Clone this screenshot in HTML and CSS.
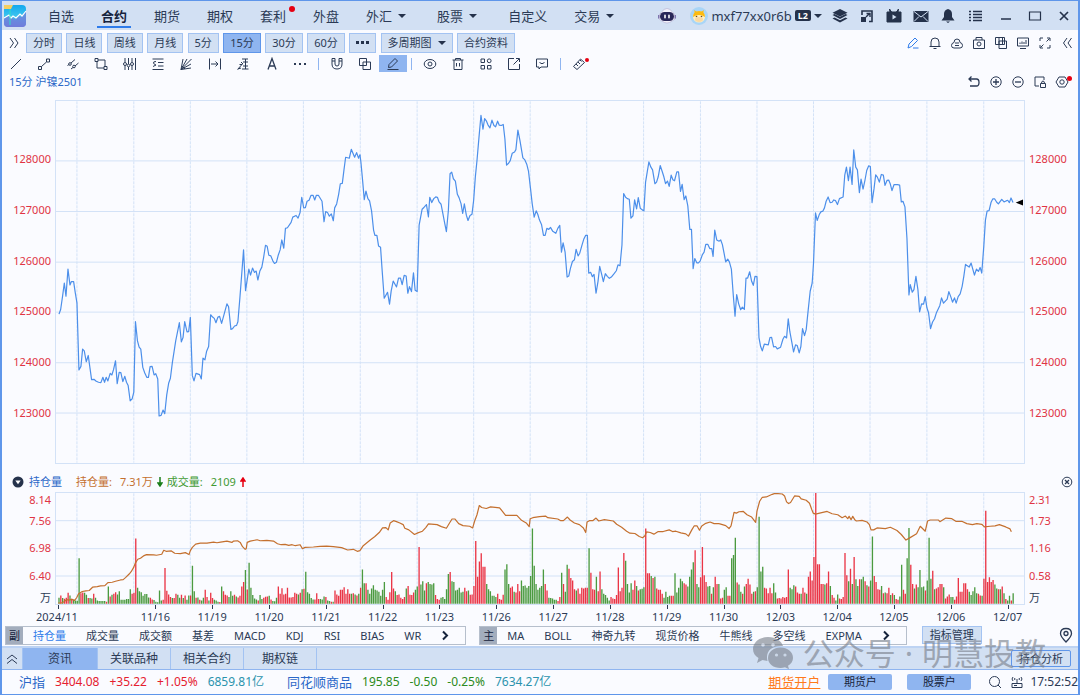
FILE: index.html
```html
<!DOCTYPE html>
<html lang="zh-CN">
<head>
<meta charset="utf-8">
<meta name="viewport" content="width=device-width, initial-scale=1">
<title>沪镍2501</title>
<link rel="stylesheet" href="styles.css">
</head>
<body>
<div class="app">
  <header class="topbar">
    <svg class="logo" viewBox="0 0 24 24"><defs><linearGradient id="lg" x1="0" y1="0" x2="0" y2="1"><stop offset="0" stop-color="#12a8ee"/><stop offset=".5" stop-color="#3cc4ee"/><stop offset="1" stop-color="#6a6fd6"/></linearGradient></defs><rect x="1" y="1" width="22" height="22" rx="4" fill="url(#lg)"/><path d="M1 14l5-2 3 2 3 2 4-4 2 1 5-6v12a4 4 0 0 1-4 4H5a4 4 0 0 1-4-4z" fill="#7280dc" opacity=".75"/><path d="M1 14l5-3 2 3 2-2 3 2 4-4 2 2 4-5" fill="none" stroke="#fff" stroke-width="1.200"/><path d="M7 5v16" stroke="#2fe0c8" stroke-width="1"/><path d="M1 1h9L8 5H1z" fill="#f3cf62"/></svg>
    <nav class="menu">
      <a href="#">自选</a><a href="#" class="on">合约</a><a href="#">期货</a><a href="#">期权</a><a href="#" class="dot">套利</a><a href="#">外盘</a><a href="#">外汇<i class="caret"></i></a><a href="#">股票<i class="caret"></i></a><a href="#">自定义</a><a href="#">交易<i class="caret"></i></a>
    </nav>
    <div class="user">
      <svg class="robot" viewBox="0 0 18 18"><path d="M3.500 5Q9-2 14.500 5L17 8v4l-3 2q-5 4-10 0l-3-2V8z" fill="#f4f2fa" stroke="#a79fc4" stroke-width=".5"/><rect x="2" y="5" width="14" height="9" rx="4.500" fill="#2a2858"/><path d="M.8 8v3.500M17.200 8v3.500" stroke="#6b5fa0" stroke-width="1.200"/><path d="M7 8.200v2.600M11 8.200v2.600" stroke="#fff" stroke-width="1.600" stroke-linecap="round"/></svg>
      <svg class="avatar" viewBox="0 0 18 18"><circle cx="9" cy="9" r="9" fill="#a9d5f7"/><ellipse cx="9" cy="10" rx="6" ry="5.500" fill="#fff0c4"/><path d="M3 10q0-6 6-6t6 6q-3-2-6-2t-6 2z" fill="#fdbb10"/><path d="M5 6L4 3l3 2M13 6l1-3-3 2" fill="#fdbb10"/><circle cx="6.500" cy="9.500" r=".8" fill="#6b4a20"/><circle cx="11.500" cy="9.500" r=".8" fill="#6b4a20"/><ellipse cx="9" cy="12.500" rx="4" ry="2.400" fill="#fbd9a2"/></svg>
      <span>mxf77xx0r6b</span><b class="level">L2</b><i class="caret"></i>
    </div>
    <div class="tools">
      <button aria-label="图层"><svg viewBox="0 0 16 16"><path d="M8 1l7.500 3.800L8 8.600.5 4.800z" fill="currentColor"/><path d="M.5 7l2-1L8 8.800 13.500 6l2 1L8 11z" fill="currentColor"/><path d="M.5 10.500l2-1L8 12.200l5.500-2.700 2 1L8 14.500z" fill="currentColor"/></svg></button>
      <button aria-label="弹出"><svg viewBox="0 0 16 16"><path d="M3 7V3h10v10.500h-3" fill="none" stroke="currentColor" stroke-width="1.600"/><path d="M7 9l4-4M7.500 5.500H11V9" fill="none" stroke="currentColor" stroke-width="1.400"/><path d="M2 9h5v5H2z" fill="currentColor"/></svg></button>
      <button aria-label="视频"><svg viewBox="0 0 16 16"><path d="M1 4h14v10H1zM3.500 1l2 3h-1.500zM12.500 1l-2 3h1.500z" fill="currentColor" stroke="currentColor"/><path d="M6.500 6.500l4 2.500-4 2.500z" fill="#d2e0f3"/></svg></button>
      <button aria-label="邮件"><svg viewBox="0 0 16 16"><path d="M.5 3h15v11H.5z" fill="currentColor"/><path d="M1 3.500l7 5.500 7-5.500M1 13.500l5-5M15 13.500l-5-5" fill="none" stroke="#d2e0f3"/></svg></button>
      <button aria-label="提醒"><svg viewBox="0 0 16 16"><path d="M8 1q4 1 4 5v3l2.500 3.500h-13L4 9V6q0-4 4-5zM6 13.500h4L8 15z" fill="currentColor"/></svg></button>
      <button aria-label="列表"><svg viewBox="0 0 16 16"><path d="M2 3.500h2M6 3.500h9M2 6.500h2M6 6.500h9M2 9.500h2M6 9.500h9M2 12.500h2M6 12.500h9" stroke="currentColor" stroke-width="1.500"/></svg></button>
    </div>
    <div class="tools win">
      <button aria-label="最小化"><svg viewBox="0 0 16 16"><path d="M3 11h10" stroke="currentColor" stroke-width="1.500"/></svg></button>
      <button aria-label="最大化"><svg viewBox="0 0 16 16"><path d="M2.500 4h11v8h-11z" fill="none" stroke="currentColor" stroke-width="1.200"/></svg></button>
      <button aria-label="关闭"><svg viewBox="0 0 16 16"><path d="M4 4l8 8M12 4l-8 8" stroke="currentColor" stroke-width="1.700"/></svg></button>
    </div>
  </header>

  <div class="bar periods">
    <button class="ico" aria-label="展开"><svg viewBox="0 0 14 14"><path d="M3 2l3.500 5L3 12M7.500 2L11 7l-3.500 5" class="s"/></svg></button>
    <div class="chips"><button>分时</button><button>日线</button><button>周线</button><button>月线</button><button>5分</button><button class="on">15分</button><button>30分</button><button>60分</button><button class="more" aria-label="更多"><i></i><i></i><i></i></button><button>多周期图<i class="caret"></i></button><button>合约资料</button></div>
    <div class="right">
      <button class="ico edit" aria-label="编辑"><svg viewBox="0 0 14 14"><path d="M2 12l1-4 6-6 2.500 2.500-6 6L2 12zM7 12h5.500" class="s"/></svg></button>
      <button class="ico" aria-label="预警"><svg viewBox="0 0 14 14"><path d="M3 10.500V6q0-4 4-4t4 4v4.500M1.500 10.500h11M5.500 12.500h3" class="s"/></svg></button>
      <button class="ico" aria-label="云"><svg viewBox="0 0 14 14"><path d="M4 12Q1.500 12 1.500 9.500T4 6.500Q4 3 7 3t3 3.500q2.500.5 2.500 3T10 12zM5 7h4M5 9.500h4" class="s"/></svg></button>
      <button class="ico" aria-label="截图"><svg viewBox="0 0 14 14"><path d="M1.500 4h11v8.500h-11zM4 4V1.500h6V4" class="s"/><circle cx="7" cy="8" r="2" class="s"/></svg></button>
      <button class="ico" aria-label="叠加"><svg viewBox="0 0 14 14"><path d="M1.500 1.500h7v7h-7zM5 5h7.500v7.500H5zM5 1.500h5.500v7H5z" class="s"/></svg></button>
      <button class="ico" aria-label="屏幕"><svg viewBox="0 0 14 14"><path d="M1.500 2h11v8h-11zM4 8V6.500M6 8V5.500M8 8V6M10 8V4M4 12.500h6" class="s"/></svg></button>
      <button class="ico" aria-label="全屏"><svg viewBox="0 0 14 14"><path d="M2 5V2h3M9 2h3v3M12 9v3H9M5 12H2V9M8.500 5.500l3-3M5.500 8.500l-3 3" class="s"/></svg></button>
      <button class="ico" aria-label="收起"><svg viewBox="0 0 14 14"><path d="M7 2L3.500 7 7 12M11.500 2L8 7l3.500 5" class="s"/></svg></button>
    </div>
  </div>

  <div class="bar draw">
    <div class="group lines">
      <button class="ico" aria-label="直线"><svg viewBox="0 0 14 14"><path d="M2 12L12 2" class="s"/></svg></button>
      <button class="ico" aria-label="线段"><svg viewBox="0 0 14 14"><path d="M1.500 9.500h3v3h-3zM9.500 2h3v3h-3zM4.500 9.500l5-4.500" class="s"/></svg></button>
      <button class="ico" aria-label="平行线"><svg viewBox="0 0 14 14"><path d="M1.500 8.500l1.500-1M5 6l4-3.500M5 12l2-1.500M9 9l3.500-3" class="s"/><circle cx="4" cy="7" r="1.300" class="s"/><circle cx="8" cy="9.500" r="1.300" class="s"/></svg></button>
      <button class="ico" aria-label="矩形"><svg viewBox="0 0 14 14"><path d="M1 1.500h3v3H1zM10 9.500h3v3h-3zM4 3h7v6.500M10 11H3V4.500" class="s"/></svg></button>
      <button class="ico" aria-label="周期线"><svg viewBox="0 0 14 14"><path d="M2 1v4M2 8.500V13M5.500 1v6M5.500 10v3M9 1v4M9 8.500V13M12.500 1v12" class="s"/><circle cx="2" cy="7" r="1.500" class="s"/><circle cx="5.500" cy="8.500" r="1.300" class="s"/><circle cx="9" cy="7" r="1.500" class="s"/></svg></button>
      <button class="ico" aria-label="黄金分割"><svg viewBox="0 0 14 14"><path d="M1.500 2h11M7 5.500h5.500M7 9h5.500M1.500 12.500h11M5 4.500Q2 4.500 2.500 6T5 8L2 9.500" class="s"/></svg></button>
      <button class="ico" aria-label="扇形"><svg viewBox="0 0 14 14"><path d="M2 12.500L4 2M2 12.500L8 2M2 12.500L12.500 2M2 12.500l10-5.500M2 12.500l10-1.500M3 9l3 3" class="s"/></svg></button>
      <button class="ico" aria-label="区间"><svg viewBox="0 0 14 14"><path d="M1.500 1.500v11M12.500 1.500v11M3 7h7M7.500 4.500L10 7 7.500 9.500" class="s"/></svg></button>
      <button class="ico" aria-label="量度"><svg viewBox="0 0 14 14"><path d="M1.500 12.500L5.500 8M3.500 7.500h3M6 2h6M7 5h5M7 9h5M6 12h6.500M9.500 2v10M2 12l3-1M5 5l2 2" class="s"/></svg></button>
      <button class="ico" aria-label="文字"><svg viewBox="0 0 14 14"><path d="M3 12.500L7 1.500l4 11M4.500 9h5" class="s w"/></svg></button>
      <button class="ico" aria-label="更多工具"><svg viewBox="0 0 14 14"><path d="M1 6h2v2H1zM6 6h2v2H6zM11 6h2v2h-2z" fill="currentColor"/></svg></button>
    </div>
    <span class="sep"></span>
    <div class="group">
      <button class="ico" aria-label="磁吸"><svg viewBox="0 0 14 14"><path d="M2 1.500h3V7q0 2 2 2t2-2V1.500h3V7q0 5-5 5T2 7zM2 4h3M9 4h3" class="s"/></svg></button>
      <button class="ico" aria-label="复制"><svg viewBox="0 0 14 14"><path d="M1.500 1.500h7v7h-7zM5 5h7.500v7.500H5z" class="s"/></svg></button>
      <button class="ico on" aria-label="画笔"><svg viewBox="0 0 14 14"><path d="M2.500 10.500l.5-3L9 1.500 11.500 4l-6 6zM1.500 12.500h11" class="s"/></svg></button>
    </div>
    <span class="sep"></span>
    <div class="group">
      <button class="ico" aria-label="显示"><svg viewBox="0 0 14 14"><ellipse cx="7" cy="7" rx="5.800" ry="4.500" class="s"/><circle cx="7" cy="7" r="2" class="s"/></svg></button>
      <button class="ico" aria-label="删除"><svg viewBox="0 0 14 14"><path d="M1.500 3h11M4.500 3V1.500h5V3M3 3v9.500h8V3M5.500 6v3.500M8.500 6v3.500" class="s"/></svg></button>
      <button class="ico" aria-label="组件"><svg viewBox="0 0 14 14"><path d="M2 2h3.500v3.500H2zM2 8.500h3.500V12H2zM8.500 8.500H12V12H8.500z" class="s"/><circle cx="10.200" cy="3.800" r="1.900" class="s"/></svg></button>
      <button class="ico" aria-label="导出"><svg viewBox="0 0 14 14"><path d="M7 1.500H1.500v11h11V7M9 1.500h3.500V5M12 2L6.500 7.500" class="s"/></svg></button>
      <button class="ico" aria-label="评论"><svg viewBox="0 0 14 14"><path d="M1.500 2h11v8H6l-2 2v-2H1.500zM4.500 5.500Q7 8 9.500 5.500" class="s"/></svg></button>
    </div>
    <span class="sep"></span>
    <button class="ico dot small" aria-label="测量"><svg viewBox="0 0 14 14"><path d="M1.500 9.500l7-7.500 4 3.500-7.500 7zM4 7l2 2M6 5l2 2M8 3l1.500 1.500" class="s"/></svg></button>
  </div>

  <div class="bar title">
    <h1>15分 沪镍2501</h1>
    <div class="right">
      <button class="ico" aria-label="撤销"><svg viewBox="0 0 14 14"><path d="M4.500 1.500L2 4l2.500 2.500M2 4h7.500Q12 4 12 7.500T9.500 11H3" class="s w"/></svg></button>
      <button class="ico" aria-label="放大"><svg viewBox="0 0 14 14"><circle cx="7" cy="7" r="5.200" class="s"/><path d="M4 7h6M7 4v6" class="s w"/></svg></button>
      <button class="ico" aria-label="缩小"><svg viewBox="0 0 14 14"><circle cx="7" cy="7" r="5.200" class="s"/><path d="M4 7h6" class="s w"/></svg></button>
      <button class="ico" aria-label="锁定"><svg viewBox="0 0 14 14"><path d="M6 11H2V2h9v3M7.500 8.500h5v4h-5zM8.500 8.500Q8.500 6 10 6t1.500 2.500" class="s"/></svg></button>
      <button class="ico dot" aria-label="设置"><svg viewBox="0 0 14 14"><path d="M4 2h6l3 5-3 5H4L1 7z" class="s"/><circle cx="7" cy="7" r="2.200" class="s"/></svg></button>
    </div>
  </div>

  <main class="charts">
    <section class="plot price">
      <div class="axis left"><span>128000</span><span>127000</span><span>126000</span><span>125000</span><span>124000</span><span>123000</span></div>
      <svg class="canvas" viewBox="166 30 2911 1094" preserveAspectRatio="none">
        <path class="grid" d="M166 211H3077M166 364H3077M166 517H3077M166 668H3077M166 821H3077M166 973H3077"/>
        <path class="grid dash" d="M229 31V1123M400 31V1123M570 31V1123M740 31V1123M910 31V1123M1081 31V1123M1252 31V1123M1422 31V1123M1592 31V1123M1762 31V1123M1933 31V1123M2104 31V1123M2274 31V1123M2444 31V1123M2614 31V1123M2785 31V1123M2956 31V1123"/>
        <polyline class="quote" points="175,674 180,660 186,618 191,580 196,620 202,538 208,586 212,576 219,576 224,610 229,640 235,843 241,832 246,780 251,785 257,818 263,799 268,836 273,872 280,871 287,877 294,880 301,881 307,865 312,880 317,865 322,876 329,853 334,858 339,842 345,815 350,884 356,850 361,851 367,878 373,862 378,880 383,890 389,936 395,930 400,910 405,697 411,755 416,774 421,780 427,835 433,852 439,865 444,865 449,833 455,832 461,858 466,854 472,870 476,982 482,980 488,964 493,975 499,918 505,882 510,868 516,820 526,755 537,700 543,758 548,745 553,697 560,728 565,727 570,684 576,860 581,876 587,853 598,857 603,870 608,807 614,812 619,786 625,772 631,676 637,683 642,687 647,700 653,683 658,681 664,702 670,680 680,643 685,652 692,720 697,718 703,710 709,708 713,697 719,625 724,560 730,480 736,603 741,570 746,538 751,556 757,535 763,548 768,544 773,571 779,544 785,532 790,505 796,466 801,469 806,496 812,498 818,513 823,521 829,517 834,497 840,480 845,450 851,475 856,415 862,413 873,397 878,381 888,376 894,384 900,367 905,321 911,353 916,352 921,333 927,330 933,315 939,315 944,329 949,315 955,315 966,333 972,395 977,364 983,368 988,378 994,371 1000,392 1004,353 1010,341 1016,312 1021,280 1027,279 1032,238 1037,200 1048,203 1054,176 1059,188 1064,200 1070,186 1076,203 1080,192"/>
        <polyline class="quote" transform="translate(1080 0)" points="0,192 3,215 8,270 13,328 18,302 24,325 29,332 35,362 41,420 45,436 51,436 56,468 62,472 67,545 73,626 83,608 89,644 94,604 100,574 110,592 116,565 122,565 127,585 133,557 139,559 144,611 149,591 155,606 161,549 166,602 172,606 178,405 187,357 193,351 200,343 206,380 210,321 216,337 222,325 228,320 233,321 238,335 244,342 249,368 255,400 260,425 266,360 271,250 276,245 281,265 287,272 293,312 298,322 304,340 309,370 314,341 320,375 325,391 331,376 337,372 342,330 347,260 352,210 358,140 364,73 370,115 375,83 380,90 385,102 391,111 397,88 403,104 408,108 414,91 419,103 425,104 431,101 436,145 441,224 447,218 452,210 458,188 465,184 469,177 475,118 481,148 490,202 496,208 502,222 507,243 513,295 518,340 524,381 530,362 535,373 540,390 546,403 552,436 557,436 562,415 568,418 573,412 580,424 589,430 595,415 601,406 606,487 611,459 617,487 623,562 628,559 633,536 639,515 645,510 650,478 656,498 661,490 668,465 673,448 679,436 684,436 688,550 694,548 699,561 704,554 710,611 716,575 721,530 727,554 732,576 738,552 744,560 750,566 756,562 765,551 771,543 776,525 782,528 788,465 793,310 799,321 804,325 810,327 815,384 821,377 826,329 832,356 837,322 843,354 849,359 854,362 859,275 864,244 869,214 875,230 880,238 887,280 892,275 897,259 903,225 909,243 914,259 919,280 925,272 930,288 936,254 941,268 946,271 953,244 958,244 964,303 969,282 975,328 980,317 986,347 992,418 997,418 1002,537 1007,506 1013,519 1018,519 1023,514 1030,494 1035,487 1040,463 1046,463 1052,476 1058,476 1062,500 1067,420 1073,450 1080,454"/>
        <polyline class="quote" transform="translate(2160 0)" points="0,454 5,450 10,464 15,490 20,516 26,508 31,516 37,538 43,620 48,680 53,615 59,643 65,661 70,653 76,660 81,565 86,565 92,546 98,575 103,587 108,560 114,561 120,745 125,772 130,785 136,765 148,767 153,745 158,744 164,773 170,772 175,779 185,774 192,750 197,741 203,746 208,688 213,728 219,760 224,788 230,767 235,769 241,791 246,772 251,718 257,739 262,721 268,662 274,605 280,580 284,520 290,368 295,391 301,374 306,365 312,363 317,353 322,333 328,320 334,337 340,336 345,329 350,331 356,343 362,325 373,320 378,254 383,230 389,271 394,230 400,282 405,178 411,230 416,238 422,307 427,266 433,296 439,268 444,240 450,226 455,228 460,337 466,295 471,253 476,260 482,275 488,252 494,254 499,285 505,270 510,269 515,281 520,301 526,283 537,283 543,284 548,335 553,333 559,350 565,445 571,616 575,585 581,608 586,600 592,560 598,600 603,667 609,643 615,644 620,621 625,655 630,670 636,718 642,698 648,688 654,669 664,648 669,625 675,641 686,629 691,606 697,622 702,638 708,625 713,641 719,621 725,613 731,590 736,560 741,524 752,532 758,520 768,556 774,538 780,545 785,533 790,550 796,470 801,390 806,363 812,361 818,336 823,326 829,326 835,336 840,341 850,327 857,335 863,332 868,330 873,337 878,323 884,337"/>
        <path d="M3052 337l22-9v18z"/>
      </svg>
      <div class="axis"><span>128000</span><span>127000</span><span>126000</span><span>125000</span><span>124000</span><span>123000</span></div>
    </section>

    <div class="legend">
      <button class="fold" aria-label="折叠"><svg viewBox="0 0 12 12"><circle cx="6" cy="6" r="5.500" fill="#25324b"/><path d="M3.300 4.500h5.400L6 8.300z" fill="#fff"/></svg></button>
      <span class="name">持仓量</span>
      <span class="value oi"><span>持仓量:</span><span>7.31万</span></span>
      <svg class="arrow" viewBox="0 0 6 10"><path d="M3 0v8M1 6l2 3 2-3z" stroke="#1a7d1a" stroke-width="1.500" fill="#1a7d1a"/></svg>
      <span class="value vol"><span>成交量:</span><span>2109</span></span>
      <svg class="arrow" viewBox="0 0 6 10"><path d="M3 10V2M1 4l2-3 2 3z" stroke="#e60012" stroke-width="1.500" fill="#e60012"/></svg>
      <button class="ico close" aria-label="关闭指标"><svg viewBox="0 0 14 14"><circle cx="7" cy="7" r="4.800" class="s"/><path d="M5 5l4 4M9 5l-4 4" class="s w"/></svg></button>
    </div>

    <section class="plot volume">
      <div class="axis left"><span>8.14</span><span>7.56</span><span>6.98</span><span>6.40</span><span class="unit">万</span></div>
      <svg class="canvas" viewBox="166 70 2911 337" preserveAspectRatio="none">
        <path class="grid" d="M166 154H3077M166 239H3077M166 322H3077"/>
        <path class="grid dash" d="M229 71V406M400 71V406M570 71V406M740 71V406M910 71V406M1081 71V406M1252 71V406M1422 71V406M1592 71V406M1762 71V406M1933 71V406M2104 71V406M2274 71V406M2444 71V406M2614 71V406M2785 71V406M2956 71V406"/>
        <path id="up" class="up"/><path id="down" class="down"/>
        <polyline class="interest" points="172,404 182,404 190,400 198,394 205,395 213,393 222,396 228,388 234,376 245,369 256,367 266,366 276,356 290,354 300,352 313,351 322,342 335,341 345,338 360,334 368,333 375,327 386,316 392,309 400,295 405,282 412,271 420,268 431,260 438,257 460,258 468,259 484,256 490,244 497,247 513,246 523,253 540,254 555,251 566,257 570,245 576,235 586,225 600,222 620,222 640,219 650,221 661,219 680,216 695,220 700,216 712,215 720,220 727,233 735,241 738,239 741,220 750,216 771,212 780,215 800,214 820,216 832,224 843,227 855,226 866,229 876,227 886,230 900,227 907,239 915,235 940,234 960,232 980,231 1000,233 1025,236 1043,243 1060,241 1072,247 1080,245"/>
        <polyline class="interest" transform="translate(1080 0)" points="0,245 10,230 20,222 32,212 44,203 58,190 68,176 78,175 85,182 91,161 101,154 110,157 120,161 130,166 135,177 147,182 164,196 174,191 188,186 198,175 206,164 232,166 245,172 260,177 269,162 277,149 286,149 297,163 310,169 330,171 339,176 345,155 352,136 359,108 366,114 380,117 393,112 420,115 428,125 438,138 472,138 486,153 500,161 509,172 512,148 520,145 540,142 558,140 565,145 595,149 604,154 612,154 624,143 632,152 645,161 660,166 672,176 679,190 683,158 690,154 700,154 710,146 718,155 735,151 762,155 772,165 787,174 802,186 812,192 827,193 840,202 850,206 857,200 862,188 873,190 884,195 897,187 912,187 930,182 940,187 950,186 965,191 980,194 988,201 998,182 1005,170 1014,170 1021,183 1028,170 1040,162 1053,158 1065,163 1080,163"/>
        <polyline class="interest" transform="translate(2160 0)" points="0,163 10,166 20,169 30,178 36,170 45,129 52,131 60,127 73,126 84,136 98,143 110,159 114,125 122,95 130,83 142,82 160,74 168,71 190,73 197,79 203,97 209,102 215,99 227,79 241,80 247,88 262,92 272,101 279,121 283,131 290,134 312,129 325,126 340,133 357,136 370,145 380,140 387,148 391,141 397,151 402,141 408,151 413,155 430,153 445,158 452,166 457,182 465,182 475,176 500,178 515,174 535,184 548,196 562,213 572,207 594,194 605,171 620,186 627,155 635,152 660,152 664,157 682,146 700,148 712,156 730,156 745,163 762,166 775,163 790,165 798,173 815,171 830,170 843,166 862,173 875,179 879,188"/>
      </svg>
      <div class="axis"><span>2.31</span><span>1.73</span><span>1.16</span><span>0.58</span><span class="unit">万</span></div>
    </section>
    <div class="dates"><span class="first">2024/11</span><span>11/16</span><span>11/19</span><span>11/20</span><span>11/21</span><span>11/22</span><span>11/23</span><span>11/26</span><span>11/27</span><span>11/28</span><span>11/29</span><span>11/30</span><span>12/03</span><span>12/04</span><span>12/05</span><span>12/06</span><span>12/07</span></div>
  </main>

  <div class="indicators">
    <div class="strip"><b>副</b><button class="on">持仓量</button><button>成交量</button><button>成交额</button><button>基差</button><button>MACD</button><button>KDJ</button><button>RSI</button><button>BIAS</button><button>WR</button><button class="next" aria-label="下一组"><svg viewBox="0 0 8 10"><path d="M2 1l4 4-4 4" fill="none" stroke="currentColor" stroke-width="2"/></svg></button></div>
    <div class="strip"><b>主</b><button>MA</button><button>BOLL</button><button>神奇九转</button><button>现货价格</button><button>牛熊线</button><button>多空线</button><button>EXPMA</button><button class="next" aria-label="下一组"><svg viewBox="0 0 8 10"><path d="M2 1l4 4-4 4" fill="none" stroke="currentColor" stroke-width="2"/></svg></button></div>
    <button class="manage">指标管理</button>
    <button class="ico pin" aria-label="定位"><svg viewBox="0 0 14 16"><path d="M7 15Q1.500 9.500 1.500 6.500 1.500 1.500 7 1.500t5.500 5Q12.500 9.500 7 15z" class="s w"/><circle cx="7" cy="6.500" r="2" class="s w"/></svg></button>
  </div>

  <nav class="panels">
    <button class="up2" aria-label="展开面板"><svg viewBox="0 0 14 14"><path d="M2 7l5-4 5 4M2 11.500l5-4 5 4" class="s"/></svg></button>
    <button class="first on">资讯</button><button>关联品种</button><button>相关合约</button><button>期权链</button>
    <button class="analysis">持仓分析</button>
  </nav>

  <footer class="status">
    <div class="index"><span class="name">沪指</span><span class="red">3404.08</span><span class="red">+35.22</span><span class="red">+1.05%</span><span class="cyan">6859.81亿</span></div>
    <div class="index second"><span class="name">同花顺商品</span><span class="green">195.85</span><span class="green">-0.50</span><span class="green">-0.25%</span><span class="cyan">7634.27亿</span></div>
    <div class="account"><a href="#">期货开户</a><button>期货户</button><button>股票户</button></div>
    <button class="ico" aria-label="搜索"><svg viewBox="0 0 14 14"><circle cx="6.500" cy="6.500" r="5" class="s"/><path d="M10 10l3 3" class="s"/></svg></button>
    <svg class="signal" viewBox="0 0 14 14"><path d="M2 8.500h10v4H2zM7 8.500V4M4 10.500h3M3 2Q1 4 3 6M11 2q2 2 0 4M5 3Q4 4 5 5M9 3q1 1 0 2" class="s"/></svg>
    <time>17:52:52</time>
  </footer>
  <div class="watermark">
    <svg viewBox="0 0 42 34"><path d="M16 1C7 1 1 6.500 1 13c0 4 2 7 5.500 9L5 27l5.500-3 5 1C13 15 20 9 31 10 29.500 5 24 1 16 1z" fill="currentColor"/><path d="M28.500 11.500c-7 0-12.500 4.500-12.500 10.500S21.500 32 28.500 32c1.500 0 3-.3 4.500-.7l4 2-1-3.500c3-2 5-4.500 5-7.800 0-6-5.500-10.500-12.500-10.500z" fill="currentColor"/><g fill="#c8d2e2"><circle cx="11" cy="9" r="1.800"/><circle cx="21" cy="9" r="1.800"/><circle cx="24.500" cy="19" r="1.600"/><circle cx="33" cy="19" r="1.600"/></g></svg>
    <span>公众号</span><span>·</span><span>明慧投教</span>
  </div>
</div>
<script src="chart.js"></script>
</body>
</html>
```
FILE: styles.css
```css
* { box-sizing: border-box; }
html, body { height: 100%; margin: 0; }
body {
  font: 11px/16px "Noto Sans", "Noto Sans CJK SC", sans-serif;
  color: #2b3a55;
  background: #fafbff;
}
button { font: inherit; color: inherit; background: none; border: 0; margin: 0; padding: 0; white-space: nowrap; }
a { color: inherit; text-decoration: none; }
svg { display: block; }
.app {
  position: relative;
  display: flex;
  flex-direction: column;
  height: 100vh;
  min-height: 500px;
  border: 1px solid #5f96ea;
  border-left-width: 2px;
  border-right-width: 2px;
  overflow: hidden;
}
.app > * { flex-shrink: 0; }
.s { fill: none; stroke: currentColor; stroke-width: 1; }
.s.w { stroke-width: 1.3; }
.caret {
  display: inline-block;
  border: 4px solid transparent;
  border-top-color: #25324b;
  border-bottom-width: 0;
}

/* title bar */
.topbar { display: flex; align-items: center; height: 29px; background: #d2e0f3; font-size: 13px; }
.logo { width: 24px; height: 24px; margin-left: 1px; }
.menu { display: flex; gap: 27px; margin-left: 21px; height: 100%; }
.menu a { position: relative; display: flex; align-items: center; white-space: nowrap; line-height: 30px; }
.menu .caret { margin: 0 4px 0 6px; }
.menu .on { font-weight: 700; color: #16233c; }
.menu .on::after { content: ""; position: absolute; left: -4px; right: -4px; bottom: 2px; height: 2px; background: #2e7bea; }
.dot { position: relative; }
.dot::after { content: ""; position: absolute; top: 5px; right: -9px; width: 6px; height: 6px; border-radius: 50%; background: #e60012; }
.user { display: flex; align-items: center; margin-left: auto; }
.robot { width: 18px; height: 18px; margin-right: 14px; }
.avatar { width: 18px; height: 18px; margin-right: 3px; }
.level { background: #25324b; color: #fff; font-size: 9px; line-height: 11px; padding: 0 3px; border-radius: 2px; margin: 0 3px; }
.tools { display: flex; color: #25324b; margin-left: 4px; }
.tools button { width: 27px; display: flex; justify-content: center; }
.tools svg { width: 16px; height: 16px; }
.tools.win { margin-left: 3px; }
.tools.win button { width: 29px; }

/* toolbars */
.bar { display: flex; align-items: center; }
.ico { display: flex; align-items: center; justify-content: center; width: 28px; height: 17px; }
.ico svg { width: 14px; height: 14px; }
.right { display: flex; margin-left: auto; }
.right .ico { width: 22px; }
.edit { color: #2e7bea; }
.periods { height: 25px; }
.periods > .ico { width: 24px; }
.chips { display: flex; justify-content: space-between; width: 489px; }
.chips button { height: 20px; line-height: 18px; padding: 0 6px; background: #d2e0f3; border: 1px solid #a3c3f2; }
.chips .on { background: #8fb5f0; border-color: #5f96ea; }
.chips .more { display: flex; align-items: center; gap: 2px; }
.more i { width: 3px; height: 3px; background: #25324b; }
.chips .caret { margin: 0 0 2px 6px; }
.draw { height: 17px; }
.group { display: flex; }
.lines { width: 312px; justify-content: space-between; }
.group .on { background: #8fb5f0; }
.sep { width: 1px; height: 12px; background: #8fb5f0; margin: 0 4px; }
.small.dot::after { width: 4px; height: 4px; top: 3px; right: 4px; }
.title { height: 19px; }
.title h1 { margin: 0 0 0 7px; font-size: 11px; font-weight: 400; color: #2b68c8; }
.title .right { margin-right: 5px; }
.title .dot::after { width: 5px; height: 5px; top: 3px; right: 1px; }

/* charts */
.app > .charts { flex: 1 1 0; min-height: 0; display: flex; flex-direction: column; padding-top: 9px; }
.plot { display: grid; grid-template-columns: 53px minmax(0, 1fr) 53px; grid-template-rows: minmax(0, 1fr); }
.price { flex: 1 1 0; min-height: 0; }
.canvas { width: 100%; height: 100%; border: 1px solid #d3e2f7; }
.axis { display: flex; flex-direction: column; padding: 34px 0 26px 4px; color: #e03444; }
.axis.left { padding-left: 0; padding-right: 4px; text-align: right; }
.axis span { flex: 1; display: flex; align-items: center; }
.axis.left span { justify-content: flex-end; }
.volume .axis { display: grid; grid-template-rows: 15fr 27fr 28fr 28fr 15fr; padding-top: 0; padding-bottom: 0; line-height: 14px; }
.volume { height: 113px; }
.axis .unit { color: #2b3a55; }
.grid { fill: none; stroke: #d3e2f7; stroke-width: 1; vector-effect: non-scaling-stroke; }
.dash { stroke-dasharray: 3 1; }
.quote, .interest { fill: none; stroke: #4c8fea; stroke-width: 1.2; stroke-linejoin: round; vector-effect: non-scaling-stroke; }
.interest { stroke: #c4702f; }
.up { fill: #ea3546; }
.down { fill: #4b9a40; }
.legend { display: flex; align-items: center; height: 18px; margin-top: 9px; margin-bottom: 1px; }
.fold { width: 12px; height: 12px; margin: 0 5px 0 10px; }
.name { color: #2b68c8; }
.value { display: flex; gap: 8px; }
.oi { color: #c4702f; margin-left: 14px; }
.vol { color: #3f9a33; }
.arrow { width: 6px; height: 10px; margin: 0 4px; }
.legend .close { margin-left: auto; width: 22px; }
.dates { display: flex; height: 19px; padding-right: 42px; }
.dates span { flex: 1; text-align: center; position: relative; padding-top: 4px; line-height: 15px; }
.dates .first { flex: 0 0 125px; text-align: left; padding-left: 34px; }
.dates span::before { content: ""; position: absolute; top: 0; left: 50%; width: 1px; height: 4px; background: #2b3a55; }
.dates .first::before { left: 56px; }

/* indicator strips */
.indicators { display: flex; align-items: center; height: 20px; margin: 1px 0 1px 3px; }
.strip { display: flex; gap: 20px; height: 19px; line-height: 17px; border: 1px solid #b6bfcc; padding-right: 16px; margin-right: 13px; }
.strip b { width: 17px; margin-right: -10px; text-align: center; background: #a3adbd; color: #16233c; font-weight: 400; }
.strip .on { color: #2e7bea; }
.next { color: #16233c; }
.next svg { width: 8px; height: 11px; }
.manage { height: 18px; line-height: 16px; margin-left: 2px; padding: 0 7px; background: #d2e0f3; border: 1px solid #a3c3f2; }
.pin { margin-left: auto; width: 24px; }
.indicators .pin svg { width: 14px; height: 16px; }

/* panel tabs */
.panels { display: flex; height: 24px; background: #d2e0f3; border-top: 2px solid #bdd3f3; border-bottom: 1px solid #8fb5f0; font-size: 12px; }
.panels button { border-right: 1px solid #a3c3f2; padding: 0 12px; line-height: 20px; }
.panels button:nth-child(5) { padding: 0 18px; }
.panels .up2 { width: 21px; padding: 0 3px; }
.up2 svg { width: 14px; height: 14px; }
.panels .first { padding: 0 25px; }
.panels .on { background: #8fb5f0; }
.panels .analysis { margin: 2px 7px 2px auto; padding: 0 7px; font-size: 11px; line-height: 14px; border: 1px solid #5f96ea; border-radius: 2px; }

/* status bar */
.status { display: flex; align-items: center; height: 24px; font-size: 12px; white-space: nowrap; }
.index { display: flex; gap: 10px; margin-left: 17px; }
.index.second { margin-left: 23px; }
.index .name { font-size: 13px; }
.red { color: #e5202f; }
.green { color: #2c8a20; }
.cyan { color: #2b93ad; }
.account { display: flex; align-items: center; margin-left: auto; }
.account a { color: #ff7a1a; font-size: 13px; text-decoration: underline; margin-right: 8px; }
.account button { width: 64px; height: 16px; font-size: 11px; line-height: 16px; color: #16233c; background: #8fb5f0; border-radius: 2px; margin-right: 15px; }
.status .ico { width: 18px; }
.signal { width: 14px; height: 14px; margin: 0 6px; }

/* account mark over the lower right corner */
.watermark {
  position: absolute;
  right: 32px;
  bottom: 21px;
  display: flex;
  align-items: center;
  gap: 9px;
  font-size: 31px;
  line-height: 40px;
  color: #7a818c;
  opacity: .62;
  pointer-events: none;
}
.watermark svg { width: 42px; height: 34px; }
```
FILE: chart.js
```js
// Volume per 15-minute bar, one row per session; negative values are falling bars.
const sessions = [
  [-18,25,-17,15,18,33,-25,15,-12,-10,-9],
  [-138,32,34,-33,-27,17,-17,-16,30,-18,-10,-8,-8,-8,-8,6,-52,22,-27,30,35,-28,-38,-12,-12,-12,-14,-14,-44,30,33],
  [198,-48,-38,-35,-24,-29,-29,-19,18,13,-11,-6,-4,-40,-10,12,108,39,28,20,-17,17,30,-27,-18,27,-17,25,-12,-25,25],
  [-115,-38,18,-19,12,-10,-18,42,20,-10,33,17,-12,-10,-6,5,-52,38,27,25,-20,-38,-24,27,-22,19,24,52,66,-102,43],
  [-124,-48,-26,-16,-13,10,-26,-14,18,21,22,-24,13,-8,-7,-18,52,30,47,28,30,48,19,19,20,33,30,-28,33,-44,45],
  [-97,-35,-30,-17,-13,13,32,14,-14,-13,-22,20,-10,-8,6,-6,40,28,24,42,42,50,30,44,30,-30,32,-28,25,-30,48],
  [-104,-62,62,-42,-30,-46,-56,-42,-40,-36,-24,-42,-66,20,12,35,96,46,-38,26,28,18,14,20,-46,54,27,26,34,-42,-52],
  [172,-58,-68,-40,62,-66,-60,-58,-62,26,14,12,-18,-20,-14,-44,-90,96,-68,-66,-40,-42,-48,-34,-36,48,38,-40,27,28,54],
  [190,82,128,153,112,112,-60,-44,-38,-24,-24,-20,30,14,12,27,-104,-120,-60,48,52,-36,34,60,38,-70,-54,-55,-48,-54,-84],
  [-228,-115,-60,-42,-48,-54,-104,60,40,-18,-17,-16,-12,-12,8,20,-94,60,-36,-118,106,78,70,44,-40,46,30,48,46,48,48],
  [-168,94,44,42,-82,38,98,-44,-30,-26,-18,-10,20,16,14,26,110,38,48,154,-130,-60,-34,-62,42,70,-54,40,-44,-45,-50],
  [228,92,92,-84,78,-82,46,42,42,30,-18,-36,-20,-24,24,24,-92,-34,-48,-76,-68,62,58,-52,-82,-104,-126,162,-60,-50,80],
  [172,86,66,-52,-54,30,-50,82,60,-60,16,18,-42,-50,24,24,-138,-148,-200,64,-58,-36,30,-52,60,76,58,30,-36,38,-50],
  [-264,-98,-112,48,46,32,48,32,-62,-34,16,17,16,20,18,20,104,-48,-44,-56,52,34,30,-30,48,34,-30,82,98,70,142],
  [336,120,120,60,60,-58,62,98,-54,26,18,-10,-28,16,14,20,154,86,-68,106,-60,142,-74,-54,74,-74,-82,68,-56,52,-70],
  [-204,84,66,44,42,-54,32,-34,32,48,-26,32,-26,14,12,-22,-118,42,30,-138,-230,118,60,-46,58,-50,-102,-50,-52,40,-70],
  [-200,-76,100,-44,46,50,60,60,-50,16,22,28,-20,-20,12,22,78,36,36,62,62,44,-36,-26,-38,-50,-32,30,25,-24,76],
  [282,66,80,66,72,-58,-46,44,-44,52,-32,14,-10,-24,10,-32]
];
const paths = { up: "", down: "" };
sessions.flat().forEach((value, i) => {
  const x = (173 + i * 5.497).toFixed(1);
  paths[value > 0 ? "up" : "down"] += `M${x} 406v${-Math.abs(value)}h4v${Math.abs(value)}z`;
});
for (const id in paths) document.getElementById(id).setAttribute("d", paths[id]);
```
